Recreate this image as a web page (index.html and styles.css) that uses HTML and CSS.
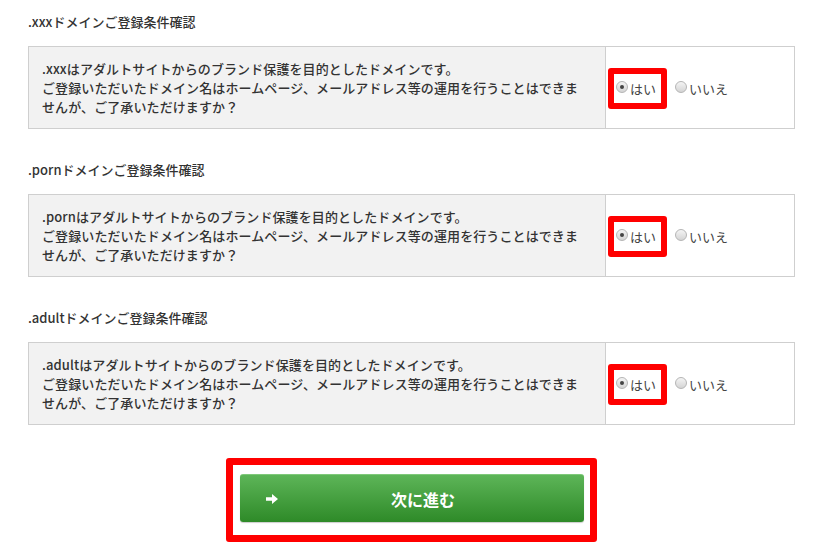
FILE: index.html
```html
<!DOCTYPE html>
<html>
  <head>
    <meta charset="utf-8">
    <title>ドメインご登録条件確認</title>
    <link rel="stylesheet" href="styles.css">
  </head>
  <body>
    <div class="page">
      <div class="section">
        <h3 class="section-title">.xxxドメインご登録条件確認</h3>
        <div class="confirm">
          <div class="confirm-text">
            .xxxはアダルトサイトからのブランド保護を目的としたドメインです。<br>
            ご登録いただいたドメイン名はホームページ、メールアドレス等の運用を行うことはできま<br>
            せんが、ご了承いただけますか？
          </div>
          <div class="confirm-choice">
            <label class="choice marked"><span class="radio checked"></span>はい</label>
            <label class="choice"><span class="radio"></span>いいえ</label>
          </div>
        </div>
      </div>

      <div class="section">
        <h3 class="section-title">.pornドメインご登録条件確認</h3>
        <div class="confirm">
          <div class="confirm-text">
            .pornはアダルトサイトからのブランド保護を目的としたドメインです。<br>
            ご登録いただいたドメイン名はホームページ、メールアドレス等の運用を行うことはできま<br>
            せんが、ご了承いただけますか？
          </div>
          <div class="confirm-choice">
            <label class="choice marked"><span class="radio checked"></span>はい</label>
            <label class="choice"><span class="radio"></span>いいえ</label>
          </div>
        </div>
      </div>

      <div class="section">
        <h3 class="section-title">.adultドメインご登録条件確認</h3>
        <div class="confirm">
          <div class="confirm-text">
            .adultはアダルトサイトからのブランド保護を目的としたドメインです。<br>
            ご登録いただいたドメイン名はホームページ、メールアドレス等の運用を行うことはできま<br>
            せんが、ご了承いただけますか？
          </div>
          <div class="confirm-choice">
            <label class="choice marked"><span class="radio checked"></span>はい</label>
            <label class="choice"><span class="radio"></span>いいえ</label>
          </div>
        </div>
      </div>

      <div class="actions">
        <div class="next-frame">
          <button class="next-btn" type="button">
            <svg class="next-icon" viewBox="0 0 12 10" width="12" height="10">
              <path d="M0 3.2h6V0l6 5-6 5V6.8H0z" fill="#fff" />
            </svg>
            <span>次に進む</span>
          </button>
        </div>
      </div>
    </div>
  </body>
</html>
```

FILE: styles.css
```css
body {
  margin: 0;
  background: #fff;
  color: #333;
  font-family: "Noto Sans CJK JP", "Noto Sans", sans-serif;
  font-size: 13px;
}

.page {
  width: 767px;
  padding: 12px 0 0 28px;
}

.section {
  margin-bottom: 31px;
}

.section-title {
  margin: 0 0 15px;
  font-size: 13px;
  font-weight: 500;
  line-height: 19px;
}

.confirm {
  display: flex;
  border: 1px solid #cfcfcf;
  height: 81px;
}

.confirm-text {
  width: 563px;
  padding: 0 0 0 13px;
  display: flex;
  flex-direction: column;
  justify-content: center;
  background: #f2f2f2;
  border-right: 1px solid #cfcfcf;
  line-height: 19px;
  font-weight: 500;
  letter-spacing: 0.1px;
}

.confirm-choice {
  flex: 1;
  display: flex;
  align-items: center;
  padding: 1px 0 0 2px;
}

.choice {
  display: inline-flex;
  align-items: center;
  height: 29px;
  padding: 0 5px 0 2px;
  border: 6px solid transparent;
  color: #444;
  font-size: 13px;
}

.choice.marked {
  border-color: #f00;
  border-radius: 3px;
}

.radio {
  width: 12px;
  height: 12px;
  margin-right: 2px;
  border-radius: 50%;
  border: 1px solid #b5b5b5;
  background: linear-gradient(#f4f4f4, #d4d4d4);
  box-sizing: border-box;
  position: relative;
  top: -1px;
}

.radio.checked::after {
  content: "";
  position: absolute;
  left: 3px;
  top: 3px;
  width: 4px;
  height: 4px;
  border-radius: 50%;
  background: #444;
}

.actions {
  display: flex;
  justify-content: center;
  padding-top: 2px;
}

.next-frame {
  border: 7px solid #f00;
  border-radius: 3px;
  padding: 9px 6px 13px 7px;
}

.next-btn {
  position: relative;
  width: 344px;
  height: 48px;
  border: 0;
  border-top: 1px solid #7fc97a;
  border-radius: 3px;
  background: linear-gradient(#5db558, #2e8a28);
  color: #fff;
  font-family: inherit;
  font-size: 16px;
  font-weight: bold;
  display: flex;
  align-items: center;
  justify-content: center;
  padding: 0 0 0 22px;
  box-shadow: 0 1px 1px rgba(0, 0, 0, 0.2);
}

.next-icon {
  position: absolute;
  left: 26px;
  top: 19px;
}
```
